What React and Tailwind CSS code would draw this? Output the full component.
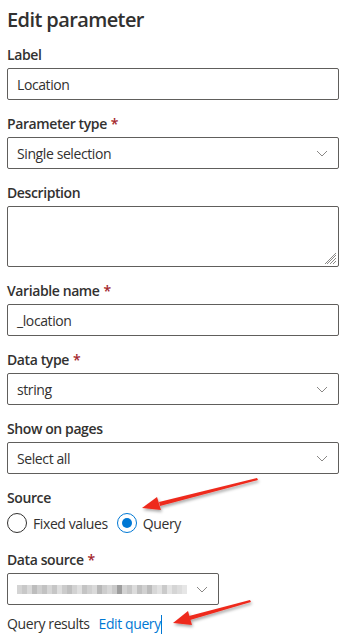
import React from 'react';

const Chevron = () => (
  <svg width="12" height="7" viewBox="0 0 12 7" className="shrink-0">
    <path d="M1 1 L6 6 L11 1" fill="none" stroke="#8a8886" strokeWidth="1" />
  </svg>
);

const Label = ({ children, required }) => (
  <div className="text-[14px] leading-5 font-semibold text-[#323130] mb-[3px]">
    {children}
    {required && <span className="text-[#a4262c] pl-1">*</span>}
  </div>
);

const TextBox = ({ value }) => (
  <div className="h-[32px] border border-[#605e5c] rounded-[2px] flex items-center px-[9px] text-[14px] text-[#323130]">
    {value}
  </div>
);

const Select = ({ value, className = '' }) => (
  <div className={`h-[32px] border border-[#605e5c] rounded-[2px] flex items-center justify-between pl-[9px] pr-[10px] text-[14px] text-[#323130] ${className}`}>
    <span>{value}</span>
    <Chevron />
  </div>
);

// pixelated data source name (blurred in the screenshot)
const blurShades = [
  '#d4d4d4', '#c8c8c8', '#d9d9d9', '#bdbdbd', '#cfcfcf', '#c2c2c2', '#d6d6d6', '#c6c6c6',
  '#dedede', '#cbcbcb', '#bfbfbf', '#d2d2d2', '#e0e0e0', '#c4c4c4', '#d0d0d0', '#dadada',
  '#b8b8b8', '#cdcdcd', '#d8d8d8', '#c9c9c9', '#9e9e9e', '#d3d3d3', '#c7c7c7', '#dcdcdc',
  '#c1c1c1', '#d1d1d1', '#bcbcbc', '#d7d7d7', '#e2e2e2', '#cacaca', '#e4e4e4', '#d5d5d5',
  '#dddddd', '#e6e6e6',
];

const Radio = ({ checked, label }) => (
  <label className="flex items-center gap-[6px] mr-[9px]">
    <span className={`w-[20px] h-[20px] rounded-full border flex items-center justify-center ${checked ? 'border-[#0078d4]' : 'border-[#323130]'}`}>
      {checked && <span className="w-[10px] h-[10px] rounded-full bg-[#0078d4]" />}
    </span>
    <span className="text-[14px] text-[#323130]">{label}</span>
  </label>
);

export default function App() {
  return (
    <div
      className="relative w-[363px] h-[642px] bg-white overflow-hidden tracking-[-0.4px]"
      style={{ fontFamily: '"Open Sans", "Noto Sans", sans-serif' }}
    >
      <div className="px-[7px] pr-[24px] pt-[6px]">
        <h1 className="text-[20px] leading-7 font-semibold text-[#323130] tracking-[-0.6px]">Edit parameter</h1>

        <div className="mt-[11px]">
          <Label>Label</Label>
          <TextBox value="Location" />
        </div>

        <div className="mt-[14px]">
          <Label required>Parameter type</Label>
          <Select value="Single selection" />
        </div>

        <div className="mt-[14px]">
          <Label>Description</Label>
          <div className="relative h-[61px] border border-[#605e5c] rounded-[2px]">
            <svg width="12" height="12" viewBox="0 0 12 12" className="absolute right-[1px] bottom-[1px]">
              <path d="M11 2 L2 11 M11 5 L5 11 M11 8 L8 11 M11 0 L0 11" stroke="#8a8886" strokeWidth="1" />
            </svg>
          </div>
        </div>

        <div className="mt-[14px]">
          <Label required>Variable name</Label>
          <TextBox value="_location" />
        </div>

        <div className="mt-[14px]">
          <Label required>Data type</Label>
          <Select value="string" />
        </div>

        <div className="mt-[14px]">
          <Label>Show on pages</Label>
          <Select value="Select all" />
        </div>

        <div className="mt-[14px]">
          <Label>Source</Label>
          <div className="flex items-center h-[24px] mt-[3px]">
            <Radio label="Fixed values" />
            <Radio checked label="Query" />
          </div>
        </div>

        <div className="mt-[15px]">
          <Label required>Data source</Label>
          <div className="w-[212px] h-[32px] border border-[#605e5c] rounded-[2px] flex items-center justify-between pl-[9px] pr-[10px]">
            <div className="flex h-[9px]">
              {blurShades.map((c, i) => (
                <span key={i} className="w-[5px] h-full" style={{ background: c }} />
              ))}
            </div>
            <Chevron />
          </div>
        </div>

        <div className="mt-[9px] flex items-center text-[14px] leading-5">
          <span className="text-[#323130]">Query results</span>
          <span className="ml-[9px] text-[#0078d4]">Edit query</span>
          <span className="w-[1px] h-[19px] bg-[#0078d4]" />
        </div>
      </div>

      <svg className="absolute inset-0 pointer-events-none" width="363" height="642">
        <defs>
          <filter id="sh" x="-20%" y="-50%" width="140%" height="200%">
            <feDropShadow dx="1" dy="2" stdDeviation="1.5" floodColor="#000" floodOpacity="0.35" />
          </filter>
        </defs>
        <g filter="url(#sh)" fill="#ee2a1f">
          <path d="M257 478 L258 480 L160 506 L159 502 Z" />
          <polygon points="142,508 161,510 157,497" />
          <path d="M250 600 L251 602 L190 620 L189 616 Z" />
          <polygon points="173,623 192,625 188,611" />
        </g>
      </svg>
    </div>
  );
}
